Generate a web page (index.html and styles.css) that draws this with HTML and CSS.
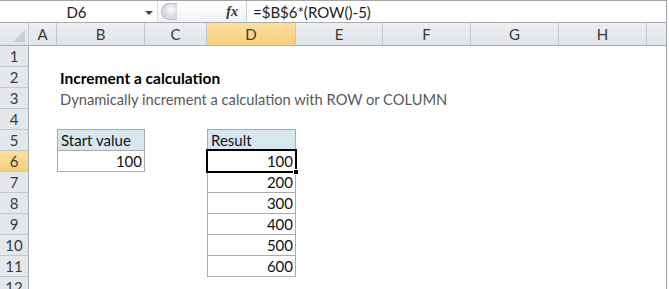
FILE: index.html
```html
<!DOCTYPE html>
<html lang="en">
<head>
    <meta charset="UTF-8">
    <meta name="viewport" content="width=device-width, initial-scale=1.0">
    <title>Increment a calculation</title>
    <link rel="stylesheet" href="styles.css">
</head>
<body>
    <div class="excel">
        <div class="formula-bar">
            <div class="name-box">
                <span class="name">D6</span>
                <span class="dropdown"></span>
            </div>
            <div class="fx-area">
                <span class="grip"></span>
                <span class="fx">fx</span>
            </div>
            <div class="formula">=$B$6*(ROW()-5)</div>
        </div>

        <div class="sheet">
            <div class="col-hdr corner"><span class="corner-mark"></span></div>
            <div class="col-hdr">A</div>
            <div class="col-hdr">B</div>
            <div class="col-hdr">C</div>
            <div class="col-hdr active">D</div>
            <div class="col-hdr">E</div>
            <div class="col-hdr">F</div>
            <div class="col-hdr">G</div>
            <div class="col-hdr">H</div>
            <div class="col-hdr last"></div>

            <div class="row-hdr">1</div>
            <div class="row-hdr">2</div>
            <div class="row-hdr">3</div>
            <div class="row-hdr">4</div>
            <div class="row-hdr">5</div>
            <div class="row-hdr active">6</div>
            <div class="row-hdr">7</div>
            <div class="row-hdr">8</div>
            <div class="row-hdr">9</div>
            <div class="row-hdr">10</div>
            <div class="row-hdr">11</div>
            <div class="row-hdr">12</div>

            <div class="title">Increment a calculation</div>
            <div class="subtitle">Dynamically increment a calculation with ROW or COLUMN</div>

            <div class="box box-start">
                <div class="cell head">Start value</div>
                <div class="cell num">100</div>
            </div>

            <div class="box box-result">
                <div class="cell head">Result</div>
                <div class="cell num">100</div>
                <div class="cell num">200</div>
                <div class="cell num">300</div>
                <div class="cell num">400</div>
                <div class="cell num">500</div>
                <div class="cell num">600</div>
            </div>

            <div class="selection"><span class="handle"></span></div>
        </div>
    </div>
</body>
</html>
```

FILE: styles.css
```css
* {
    margin: 0;
    padding: 0;
    box-sizing: border-box;
}

body {
    background: #ffffff;
    font-family: Lato, 'Liberation Sans', sans-serif;
    font-size: 15px;
    color: #000;
}

.excel {
    width: 667px;
    height: 289px;
    border-right: 1px solid #9ea3aa;
    overflow: hidden;
}

/* formula bar */
.formula-bar {
    display: flex;
    height: 23px;
    border-top: 1px solid #a3a3a3;
    border-bottom: 1px solid #a9adb3;
    background: #fff;
}

.name-box {
    width: 158px;
    display: flex;
    align-items: center;
    border-right: 1px solid #d8dadd;
}

.name {
    flex: 1;
    text-align: center;
    padding-left: 8px;
    color: #1e1e1e;
}

.dropdown {
    width: 0;
    height: 0;
    border-left: 4px solid transparent;
    border-right: 4px solid transparent;
    border-top: 4px solid #444;
    margin-right: 4px;
    margin-top: 2px;
}

.fx-area {
    width: 88px;
    display: flex;
    align-items: center;
    background: linear-gradient(#ffffff, #f1f2f4);
}

.grip {
    width: 16px;
    height: 17px;
    margin-left: 3px;
    border: 1px solid #b9bdc3;
    border-right: none;
    border-radius: 9px 0 0 9px;
    background: radial-gradient(circle at 9px 6px, #f4f5f7 2px, #d9dce0 6px);
}

.fx {
    margin-left: auto;
    margin-right: 8px;
    font-family: 'Liberation Serif', serif;
    font-style: italic;
    font-weight: bold;
    font-size: 14px;
    color: #333;
}

.formula {
    flex: 1;
    border-left: 1px solid #c9ccd0;
    padding-left: 6px;
    display: flex;
    align-items: center;
    color: #1e1e1e;
}

/* sheet grid */
.sheet {
    display: grid;
    grid-template-columns: 29px 28px 88px 62px 89px 87px 88px 88px 88px 20px;
    grid-template-rows: 23px repeat(12, 21px);
}

.col-hdr {
    background: linear-gradient(#eceef2, #e0e3e8);
    border-right: 1px solid #c3c7cd;
    border-bottom: 1px solid #a9aeb6;
    display: flex;
    align-items: center;
    justify-content: center;
    color: #3a3a3a;
}

.col-hdr.last {
    border-right: none;
}

.col-hdr.active,
.row-hdr.active {
    background: linear-gradient(#fbdf9f, #f6cf7c);
}

.corner {
    position: relative;
}

.corner-mark {
    position: absolute;
    right: 3px;
    bottom: 3px;
    width: 0;
    height: 0;
    border-left: 12px solid transparent;
    border-bottom: 12px solid #c9ccd1;
}

.row-hdr {
    grid-column: 1;
    background: #e4e7ec;
    border-right: 1px solid #a9aeb6;
    border-bottom: 1px solid #c3c7cd;
    display: flex;
    align-items: center;
    justify-content: center;
    color: #3a3a3a;
}

.title,
.subtitle {
    grid-column: 3 / span 7;
    padding-left: 3px;
    display: flex;
    align-items: center;
    white-space: nowrap;
}

.title {
    grid-row: 3;
    font-weight: bold;
    font-size: 15.5px;
}

.subtitle {
    grid-row: 4;
    color: #595959;
    font-size: 14.7px;
}

.box {
    display: flex;
    flex-direction: column;
    border: 1px solid #ababab;
    border-bottom: none;
    margin-top: -1px;
}

.box-start {
    grid-column: 3;
    grid-row: 6 / span 2;
}

.box-result {
    grid-column: 5;
    grid-row: 6 / span 7;
}

.cell {
    height: 21px;
    border-bottom: 1px solid #ababab;
    padding: 0 2px 0 3px;
    display: flex;
    align-items: center;
    color: #111;
}

.cell.head {
    background: #d7e7f0;
}

.cell.num {
    justify-content: flex-end;
}

.selection {
    grid-column: 5;
    grid-row: 7;
    position: relative;
    margin: -2px -1px -1px -1px;
    border: 2px solid #000;
}

.handle {
    position: absolute;
    right: -4px;
    bottom: -4px;
    width: 6px;
    height: 6px;
    background: #000;
    border: 1px solid #fff;
}
```
